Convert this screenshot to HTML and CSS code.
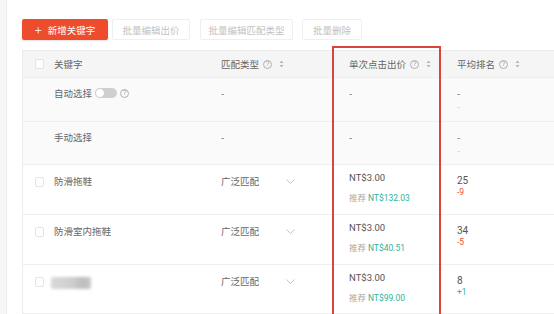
FILE: index.html
```html
<!DOCTYPE html>
<html lang="zh">
<head>
<meta charset="utf-8">
<link rel="stylesheet" href="styles.css">
</head>
<body>
<div class="page">
  <div class="strip"></div>
  <div class="panel">
    <div class="toolbar">
      <button class="btn btn-primary"><span class="plus">+</span>新增关键字</button>
      <button class="btn btn-ghost">批量编辑出价</button>
      <button class="btn btn-ghost">批量编辑匹配类型</button>
      <button class="btn btn-ghost">批量删除</button>
    </div>
    <div class="table">
      <div class="row head">
        <div class="cell c-check"><span class="checkbox"></span></div>
        <div class="cell c-kw">关键字</div>
        <div class="cell c-match">匹配类型<span class="help">?</span><svg class="sort" width="5" height="8" viewBox="0 0 5 8"><path d="M2.5 0.5 L4.5 3 L0.5 3 Z M2.5 7.5 L4.5 5 L0.5 5 Z" fill="#b5b5b5"/></svg></div>
        <div class="cell c-bid">单次点击出价<span class="help">?</span><svg class="sort" width="5" height="8" viewBox="0 0 5 8"><path d="M2.5 0.5 L4.5 3 L0.5 3 Z M2.5 7.5 L4.5 5 L0.5 5 Z" fill="#b5b5b5"/></svg></div>
        <div class="cell c-rank">平均排名<span class="help">?</span><svg class="sort" width="5" height="8" viewBox="0 0 5 8"><path d="M2.5 0.5 L4.5 3 L0.5 3 Z M2.5 7.5 L4.5 5 L0.5 5 Z" fill="#b5b5b5"/></svg></div>
      </div>

      <div class="row sys">
        <div class="cell c-check"></div>
        <div class="cell c-kw">自动选择<span class="toggle"><span class="knob"></span></span><span class="help">?</span></div>
        <div class="cell c-match">-</div>
        <div class="cell c-bid">-</div>
        <div class="cell c-rank"><div>-</div><div class="faint">-</div></div>
      </div>

      <div class="row sys">
        <div class="cell c-check"></div>
        <div class="cell c-kw">手动选择</div>
        <div class="cell c-match">-</div>
        <div class="cell c-bid">-</div>
        <div class="cell c-rank"><div>-</div><div class="faint">-</div></div>
      </div>

      <div class="row kw">
        <div class="cell c-check"><span class="checkbox"></span></div>
        <div class="cell c-kw">防滑拖鞋</div>
        <div class="cell c-match"><span class="match-text">广泛匹配</span><svg class="chev" width="9" height="5" viewBox="0 0 9 5"><path d="M0.5 0.5 L4.5 4.5 L8.5 0.5" fill="none" stroke="#c4c4c4" stroke-width="1"/></svg></div>
        <div class="cell c-bid"><div class="price">NT$3.00</div><div class="rec">推荐 <span class="rec-val">NT$132.03</span></div></div>
        <div class="cell c-rank"><div class="rank">25</div><div class="delta down">-9</div></div>
      </div>

      <div class="row kw">
        <div class="cell c-check"><span class="checkbox"></span></div>
        <div class="cell c-kw">防滑室内拖鞋</div>
        <div class="cell c-match"><span class="match-text">广泛匹配</span><svg class="chev" width="9" height="5" viewBox="0 0 9 5"><path d="M0.5 0.5 L4.5 4.5 L8.5 0.5" fill="none" stroke="#c4c4c4" stroke-width="1"/></svg></div>
        <div class="cell c-bid"><div class="price">NT$3.00</div><div class="rec">推荐 <span class="rec-val">NT$40.51</span></div></div>
        <div class="cell c-rank"><div class="rank">34</div><div class="delta down">-5</div></div>
      </div>

      <div class="row kw">
        <div class="cell c-check"><span class="checkbox"></span></div>
        <div class="cell c-kw"><span class="blurred"></span></div>
        <div class="cell c-match"><span class="match-text">广泛匹配</span><svg class="chev" width="9" height="5" viewBox="0 0 9 5"><path d="M0.5 0.5 L4.5 4.5 L8.5 0.5" fill="none" stroke="#c4c4c4" stroke-width="1"/></svg></div>
        <div class="cell c-bid"><div class="price">NT$3.00</div><div class="rec">推荐 <span class="rec-val">NT$99.00</span></div></div>
        <div class="cell c-rank"><div class="rank">8</div><div class="delta up">+1</div></div>
      </div>
    </div>
  </div>
  <div class="highlight"></div>
</div>
</body>
</html>
```

FILE: styles.css
```css
* { box-sizing: border-box; }
html, body {
  margin: 0;
  padding: 0;
  background: #ffffff;
  overflow: hidden;
}
body {
  width: 554px;
  height: 314px;
  font-family: Roboto, "Noto Sans CJK SC", sans-serif;
  font-size: 9.5px;
  color: #555;
}
.page {
  position: relative;
  display: flex;
  height: 314px;
}
.strip {
  width: 7px;
  flex: none;
  background: #f6f6f6;
  border-right: 1px solid #ececec;
}
.panel {
  flex: 1;
  padding: 19px 0 0 15px;
  min-width: 0;
}
.toolbar {
  display: flex;
  align-items: center;
  height: 21px;
  margin-bottom: 10px;
}
.btn {
  font-family: "Noto Sans CJK SC", sans-serif;
  font-size: 9.5px;
  height: 21px;
  border-radius: 2px;
  padding: 0;
  display: flex;
  align-items: center;
  justify-content: center;
  white-space: nowrap;
  flex: none;
  cursor: default;
}
.btn-primary {
  width: 86px;
  background: #ee4d2d;
  border: none;
  color: #fff;
  box-shadow: 0 1px 2px rgba(0,0,0,0.12);
}
.plus {
  font-size: 13px;
  font-weight: 300;
  margin-right: 6px;
  line-height: 1;
  margin-top: -1px;
}
.btn-ghost {
  background: #fff;
  border: 1px solid #efefef;
  color: #c2c2c2;
}
.btn-ghost:nth-child(2) { margin-left: 4px; width: 78px; }
.btn-ghost:nth-child(3) { margin-left: 10px; width: 93px; }
.btn-ghost:nth-child(4) { margin-left: 9px; width: 60px; }

.table {
  border-left: 1px solid #ececec;
  border-top: 1px solid #ececec;
  font-family: "Noto Sans CJK SC", sans-serif;
}
.row {
  display: grid;
  grid-template-columns: 21px 166px 128px 108px 1fr;
  border-bottom: 1px solid #efefef;
}
.cell {
  padding-left: 10px;
  display: flex;
  align-items: flex-start;
  white-space: nowrap;
}
.c-check { padding-left: 12px; }
.c-match, .c-bid, .c-rank { padding-left: 11px; }

.head {
  height: 27px;
  background: #f5f5f5;
  color: #666;
}
.head .cell { align-items: center; }
.sys {
  background: #fafafa;
  color: #666;
}
.sys:nth-child(2) { height: 44px; }
.sys:nth-child(3) { height: 43px; }
.sys .cell { padding-top: 9px; line-height: 13px; }
.sys .c-rank { flex-direction: column; }
.faint { color: #cfcfcf; }

.kw { height: 50px; background: #fff; }
.kw:last-child { height: 49px; }
.kw .c-check { padding-top: 12px; }
.kw .c-kw { padding-top: 10px; line-height: 13px; color: #666; }
.kw .c-match { padding-top: 10px; line-height: 13px; color: #666; }
.match-text { flex: none; }
.chev { margin-left: 27px; margin-top: 4px; flex: none; }
.kw .c-bid { flex-direction: column; padding-top: 6px; }
.price {
  font-family: Roboto, sans-serif;
  font-size: 9.5px;
  line-height: 13px;
  color: #555;
}
.rec {
  margin-top: 7px;
  line-height: 13px;
  font-size: 8.5px;
  color: #a8a8a8;
}
.rec-val {
  font-family: Roboto, sans-serif;
  color: #2fb39a;
  font-size: 8.5px;
}
.kw .c-rank { flex-direction: column; padding-top: 9px; }
.rank {
  font-family: Roboto, sans-serif;
  font-size: 10px;
  line-height: 13px;
  color: #555;
}
.delta {
  font-family: Roboto, sans-serif;
  font-size: 8.5px;
  line-height: 11px;
}
.down { color: #ee4d2d; }
.up { color: #2fb39a; }

.checkbox {
  display: block;
  width: 10px;
  height: 10px;
  background: #fff;
  border: 1px solid #e3e3e3;
  border-radius: 2px;
}
.help {
  display: inline-flex;
  align-items: center;
  justify-content: center;
  width: 9px;
  height: 9px;
  border: 1px solid #b0b0b0;
  border-radius: 50%;
  font-family: "Liberation Sans", sans-serif;
  font-size: 6.5px;
  line-height: 1;
  color: #a0a0a0;
  margin-left: 4px;
  flex: none;
}
.sort { margin-left: 7px; flex: none; }

.toggle {
  position: relative;
  display: inline-block;
  width: 22px;
  height: 10px;
  background: #cfcfcf;
  border-radius: 5px;
  margin-left: 3px;
  margin-top: 1px;
  flex: none;
}
.knob {
  position: absolute;
  left: 0;
  top: 0;
  width: 10px;
  height: 10px;
  border-radius: 50%;
  background: #fff;
  border: 1px solid #cfcfcf;
}
.sys .help { margin-top: 2px; margin-left: 3px; }

.blurred {
  display: block;
  width: 40px;
  height: 12px;
  margin-top: 2px;
  margin-left: -3px;
  background: linear-gradient(90deg, #d8d8d8 0%, #cfcfcf 50%, #bdbdbd 80%, #c9c9c9 100%);
  filter: blur(1.5px);
  border-radius: 2px;
}

.highlight {
  position: absolute;
  left: 332px;
  top: 46px;
  width: 109px;
  height: 280px;
  border: 2px solid #d9453c;
  pointer-events: none;
}
```
